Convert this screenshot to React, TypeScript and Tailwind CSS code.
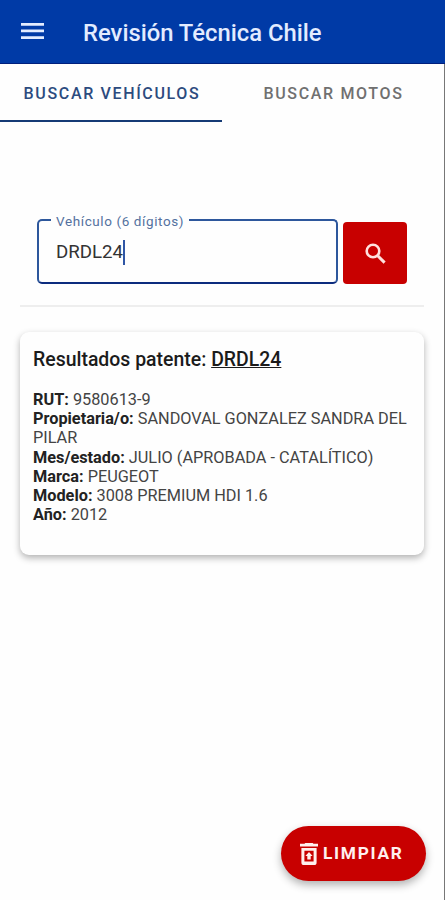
const results = [
  { label: "RUT", value: "9580613-9" },
  { label: "Propietaria/o", value: "SANDOVAL GONZALEZ SANDRA DEL PILAR" },
  { label: "Mes/estado", value: "JULIO (APROBADA - CATALÍTICO)" },
  { label: "Marca", value: "PEUGEOT" },
  { label: "Modelo", value: "3008 PREMIUM HDI 1.6" },
  { label: "Año", value: "2012" },
];

export default function App() {
  return (
    <div className="relative flex h-[900px] w-[445px] flex-col overflow-hidden bg-[#fefefe] font-[Roboto,sans-serif] text-[#222]">
      <header className="flex h-16 shrink-0 items-center border-b border-[#001f7c] bg-[#003aa6] pt-[3px] pl-[21px] text-[#e3ecff]">
        <button className="mr-[39px] flex pb-[4px]">
          <svg className="h-4 w-[23px]" viewBox="0 0 23 16" fill="currentColor">
            <path d="M0 0h23v2.7H0zM0 6.6h23v2.7H0zM0 13.2h23v2.7H0z" />
          </svg>
        </button>
        <h1 className="text-[23.8px] leading-8 font-medium whitespace-nowrap">Revisión Técnica Chile</h1>
      </header>

      <div className="flex min-h-0 grow flex-col border-r border-[#777]">
        <nav className="flex h-[58px] shrink-0 text-[16px] font-medium tracking-[1.65px] whitespace-nowrap">
          <button className="w-[222px] border-b-2 border-[#153a75] pt-1 pl-[2px] text-[#2c4b7e]">
            BUSCAR VEHÍCULOS
          </button>
          <button className="w-[222px] border-b-2 border-transparent pt-1 pl-px text-[#707070]">
            BUSCAR MOTOS
          </button>
        </nav>

        <div className="mx-5 mt-[97px] flex h-[88px] shrink-0 border-b-2 border-[#eeeeee] pl-[17px]">
          <div className="relative h-[65px] w-[301px] rounded-[5px] border-[2.5px] border-[#2d579c] border-b-[#0c2c7e]">
            <label className="absolute -top-[10px] left-[12px] bg-[#fefefe] px-[5px] text-[13.5px] leading-5 tracking-[0.6px] whitespace-nowrap text-[#54719e]">
              Vehículo (6 dígitos)
            </label>
            <div className="flex h-full items-center pt-[2px] pl-[17px] text-[18.7px] text-[#333]">
              DRDL24
              <span className="h-[25px] w-[2px] bg-[#2f56a5]" />
            </div>
          </div>
          <button className="mt-[3px] ml-[5px] flex h-[62px] w-16 items-center justify-center rounded-[4px] bg-[#c80000] text-[#ffe1de]">
            <svg className="h-[21px] w-[21px]" viewBox="0 0 21 21" fill="none" stroke="currentColor">
              <circle cx="8" cy="8" r="6.3" strokeWidth="2.6" />
              <path d="M12.7 12.7l6.9 6.9" strokeWidth="3" />
            </svg>
          </button>
        </div>

        <section className="mx-5 mt-[25px] h-[223px] shrink-0 rounded-[9px] bg-[#fefefe] px-[13px] pt-[15px] shadow-[0_3px_7px_rgba(0,0,0,0.3)]">
          <h2 className="text-[19.45px] leading-[26px] font-medium text-[#1b1b1b]">
            Resultados patente: <span className="underline">DRDL24</span>
          </h2>
          <dl className="-mr-2 mt-[17px] text-[16.3px] leading-[19.2px]">
            {results.map((row) => (
              <div key={row.label}>
                <dt className="inline font-bold">{row.label}:</dt>{" "}
                <dd className="inline text-[#444]">{row.value}</dd>
              </div>
            ))}
          </dl>
        </section>
      </div>

      <button className="absolute right-[19px] bottom-[19px] flex h-[55px] w-[145px] items-center gap-[5px] rounded-full bg-[#c80000] pl-[19px] text-[17.3px] font-bold tracking-[1.7px] text-[#fff0ee] shadow-[0_4px_8px_rgba(0,0,0,0.3)]">
        <svg className="h-[22px] w-[18px]" viewBox="0 0 18 22" fill="currentColor">
          <path d="M0 .8h4.5L5.3 0h7.4l.8.8H18v2.6H0z" />
          <path
            fillRule="evenodd"
            d="M1.4 5h15.2v14.4a2.6 2.6 0 0 1-2.6 2.6H4a2.6 2.6 0 0 1-2.6-2.6zM4.4 7.8v10.8h9.2V7.8z"
          />
          <path d="M9 9l3.6 4h-1.9v3.4H7.3V13H5.4z" />
        </svg>
        LIMPIAR
      </button>
    </div>
  );
}
